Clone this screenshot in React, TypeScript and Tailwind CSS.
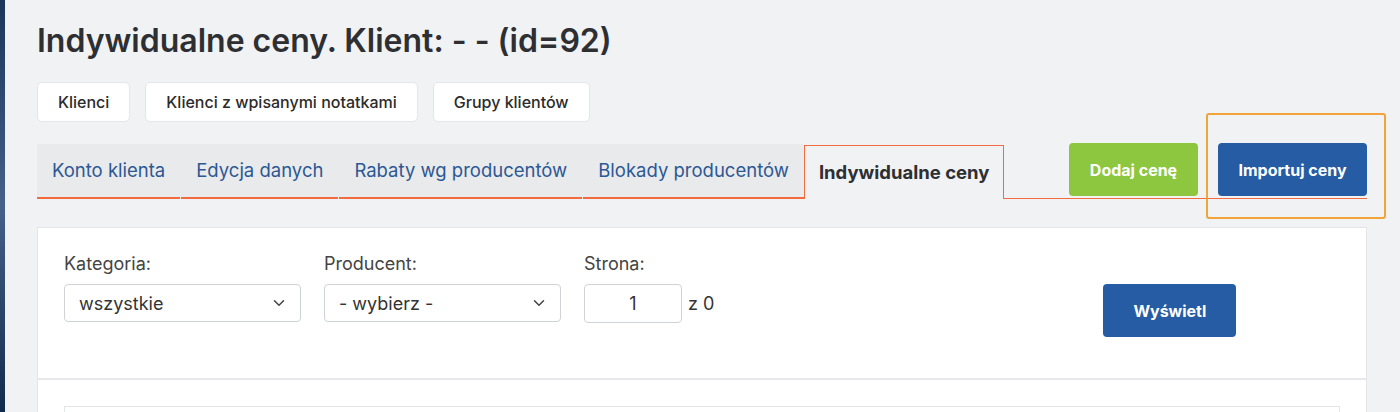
import { ChevronDown } from "lucide-react";
import React from "react";

const tabs = ["Konto klienta", "Edycja danych", "Rabaty wg producentów", "Blokady producentów"];

const TopButton = ({ label }: { label: string }) => (
  <button className="h-10 px-[20px] bg-white border border-[#e4e6ea] rounded-[5px] text-[16px] font-medium text-[#2b2b2b]">
    {label}
  </button>
);

const SelectBox = ({ value }: { value: string }) => (
  <div className="w-[237px] h-[38px] flex items-center justify-between pl-[14px] pr-[12px] bg-white border border-[#cfd3d8] rounded-[4px]">
    <span className="text-[18px] text-[#333]">{value}</span>
    <ChevronDown size={18} strokeWidth={2} className="text-[#444]" />
  </div>
);

const App = () => {
  return (
    <div
      className="w-[1400px] h-[412px] overflow-hidden flex bg-[#f1f2f4]"
      style={{ fontFamily: "Inter, 'Noto Sans', sans-serif" }}
    >
      <div className="w-[5px] shrink-0 bg-gradient-to-b from-[#1c355a] via-[#46628a] to-[#122a4b]" />
      <div className="flex-1 pl-[32px] pr-[33px]">
        <h1 className="pt-[21px] text-[32px] leading-[40px] font-semibold text-[#2d2f33]">
          Indywidualne ceny. Klient: - - (id=92)
        </h1>

        <div className="mt-[21px] flex gap-[15px]">
          <TopButton label="Klienci" />
          <TopButton label="Klienci z wpisanymi notatkami" />
          <TopButton label="Grupy klientów" />
        </div>

        {/* tabs + action buttons */}
        <div className="mt-[21px] h-[56px] flex items-end">
          <div className="flex gap-px bg-[#e9eaec]">
            {tabs.map((t) => (
              <div
                key={t}
                className="h-[55px] px-[15px] flex items-center border-b-2 border-[#f26a3e] text-[18.5px] text-[#2c5893] whitespace-nowrap"
              >
                {t}
              </div>
            ))}
          </div>
          <div className="h-[54px] px-[14px] flex items-center border border-b-0 border-[#f26a3e] text-[18.5px] font-bold text-[#2d2f33] whitespace-nowrap">
            Indywidualne ceny
          </div>
          <div className="flex-1 h-[56px] flex items-end justify-end gap-[20px] pb-[2px] border-b border-[#f26a3e]">
            <button className="h-[53px] w-[129px] rounded-[4px] bg-[#8dc63f] text-white text-[16px] font-bold">
              Dodaj cenę
            </button>
            <div className="relative">
              <button className="h-[53px] w-[149px] rounded-[4px] bg-[#255ca3] text-white text-[16px] font-bold">
                Importuj ceny
              </button>
              <div className="absolute -left-[12px] -right-[19px] -top-[30px] -bottom-[23px] border-2 border-[#f2a33a] rounded-[3px] pointer-events-none" />
            </div>
          </div>
        </div>

        {/* card */}
        <div className="mt-[28px] bg-white border border-[#e3e5e8]">
          <div className="h-[150px] pl-[26px] pt-[24px] flex">
            <div className="flex gap-[23px]">
              <div className="flex flex-col gap-[8px]">
                <span className="text-[18px] leading-[24px] text-[#444]">Kategoria:</span>
                <SelectBox value="wszystkie" />
              </div>
              <div className="flex flex-col gap-[8px]">
                <span className="text-[18px] leading-[24px] text-[#444]">Producent:</span>
                <SelectBox value="- wybierz -" />
              </div>
              <div className="flex flex-col gap-[8px]">
                <span className="text-[18px] leading-[24px] text-[#444]">Strona:</span>
                <div className="flex items-center gap-[6px]">
                  <div className="w-[98px] h-[39px] flex items-center justify-center bg-white border border-[#cfd3d8] rounded-[4px] text-[18px] text-[#333]">
                    1
                  </div>
                  <span className="text-[18px] text-[#333]">z 0</span>
                </div>
              </div>
            </div>
            <button className="ml-[389px] mt-[32px] h-[53px] w-[133px] rounded-[4px] bg-[#255ca3] text-white text-[16px] font-bold">
              Wyświetl
            </button>
          </div>
          <div className="border-t-2 border-[#e6e8eb] pt-[26px] px-[26px]">
            <div className="h-[60px] border border-[#e3e5e8]" />
          </div>
        </div>
      </div>
    </div>
  );
};

export default App;
